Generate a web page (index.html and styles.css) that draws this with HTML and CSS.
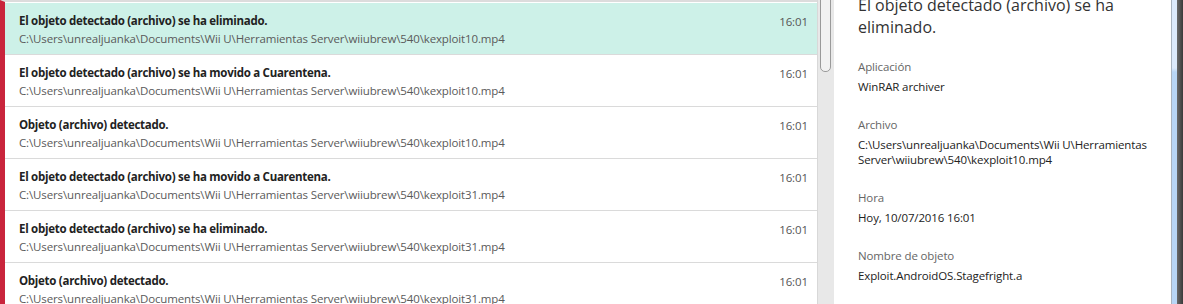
FILE: index.html
```html
<!DOCTYPE html>
<html lang="es">
<head>
<meta charset="utf-8">
<link rel="stylesheet" href="styles.css">
</head>
<body>
<div class="app">
  <div class="list">
    <div class="row selected">
      <div class="text">
        <div class="title">El objeto detectado (archivo) se ha eliminado.</div>
        <div class="path">C:\Users\unrealjuanka\Documents\Wii U\Herramientas Server\wiiubrew\540\kexploit10.mp4</div>
      </div>
      <div class="time">16:01</div>
    </div>
    <div class="row">
      <div class="text">
        <div class="title">El objeto detectado (archivo) se ha movido a Cuarentena.</div>
        <div class="path">C:\Users\unrealjuanka\Documents\Wii U\Herramientas Server\wiiubrew\540\kexploit10.mp4</div>
      </div>
      <div class="time">16:01</div>
    </div>
    <div class="row">
      <div class="text">
        <div class="title">Objeto (archivo) detectado.</div>
        <div class="path">C:\Users\unrealjuanka\Documents\Wii U\Herramientas Server\wiiubrew\540\kexploit10.mp4</div>
      </div>
      <div class="time">16:01</div>
    </div>
    <div class="row">
      <div class="text">
        <div class="title">El objeto detectado (archivo) se ha movido a Cuarentena.</div>
        <div class="path">C:\Users\unrealjuanka\Documents\Wii U\Herramientas Server\wiiubrew\540\kexploit31.mp4</div>
      </div>
      <div class="time">16:01</div>
    </div>
    <div class="row">
      <div class="text">
        <div class="title">El objeto detectado (archivo) se ha eliminado.</div>
        <div class="path">C:\Users\unrealjuanka\Documents\Wii U\Herramientas Server\wiiubrew\540\kexploit31.mp4</div>
      </div>
      <div class="time">16:01</div>
    </div>
    <div class="row">
      <div class="text">
        <div class="title">Objeto (archivo) detectado.</div>
        <div class="path">C:\Users\unrealjuanka\Documents\Wii U\Herramientas Server\wiiubrew\540\kexploit31.mp4</div>
      </div>
      <div class="time">16:01</div>
    </div>
  </div>
  <div class="scrollbar"><div class="thumb"></div></div>
  <div class="detail">
    <h1 class="heading">El objeto detectado (archivo) se ha eliminado.</h1>
    <div class="field">
      <div class="label">Aplicación</div>
      <div class="value">WinRAR archiver</div>
    </div>
    <div class="field">
      <div class="label">Archivo</div>
      <div class="value wrap">C:\Users\unrealjuanka\Documents\Wii U\Herramientas Server\wiiubrew\540\kexploit10.mp4</div>
    </div>
    <div class="field">
      <div class="label">Hora</div>
      <div class="value">Hoy, 10/07/2016 16:01</div>
    </div>
    <div class="field">
      <div class="label">Nombre de objeto</div>
      <div class="value">Exploit.AndroidOS.Stagefright.a</div>
    </div>
  </div>
  <div class="frame"><div class="frame-line"></div><div class="frame-glass"></div><div class="frame-dark"></div></div>
</div>
</body>
</html>
```
FILE: styles.css
```css
* { box-sizing: border-box; }
html, body { margin: 0; padding: 0; }
body {
  font-family: "Open Sans", "Noto Sans", sans-serif;
  background: #fff;
  width: 1183px;
  height: 304px;
  overflow: hidden;
}
.app {
  display: flex;
  height: 304px;
  overflow: hidden;
}
.list {
  width: 817px;
  flex: none;
  border-top: 2px solid #dcdcdc;
  padding-top: 1px;
  border-left: 5px solid #c9253c;
}
.row {
  display: flex;
  align-items: flex-start;
  height: 52px;
  padding: 9px 9px 0 14px;
  border-bottom: 1px solid #dadada;
}
.row.selected { background: #cdf1e8; }
.text { flex: 1; min-width: 0; }
.title {
  font-size: 11.5px;
  font-weight: 700;
  letter-spacing: -0.28px;
  line-height: 18px;
  color: #222;
  white-space: nowrap;
}
.path {
  font-size: 11.5px;
  letter-spacing: -0.13px;
  line-height: 18px;
  color: #5a5a5a;
  white-space: nowrap;
}
.time {
  font-size: 11.5px;
  letter-spacing: -0.1px;
  line-height: 18px;
  color: #555;
  padding-top: 1px;
}
.scrollbar {
  width: 17px;
  flex: none;
  background: #e8e8e8;
  border-left: 1px solid #d8d8d8;
  position: relative;
}
.thumb {
  position: absolute;
  left: 2px;
  top: -10px;
  width: 11px;
  height: 82px;
  border: 1px solid #9a9a9a;
  border-radius: 5px;
  background: #f2f2f2;
}
.detail {
  flex: 1;
  padding: 0 10px 0 24px;
  min-width: 0;
}
.heading {
  margin: -6px 0 20px;
  font-size: 16px;
  font-weight: 400;
  line-height: 22px;
  color: #333;
  max-width: 300px;
}
.field { margin-bottom: 20px; }
.label {
  font-size: 11.5px;
  letter-spacing: -0.13px;
  line-height: 18px;
  color: #666;
}
.value {
  margin-top: 2px;
  font-size: 11.5px;
  letter-spacing: -0.13px;
  line-height: 18px;
  color: #222;
}
.value.wrap { margin-top: 0; line-height: 15px; padding: 3px 0 2px; }
.frame {
  width: 12px;
  flex: none;
  display: flex;
}
.frame-line { width: 1px; background: #a9b4c0; }
.frame-glass {
  width: 5px;
  background: linear-gradient(to bottom, #dceafb 0, #dceafb 68px, #b8d6f6 72px, #b8d6f6 100%);
}
.frame-dark { flex: 1; background: linear-gradient(to right, #6a6a6a, #3a3a3a); }
```
